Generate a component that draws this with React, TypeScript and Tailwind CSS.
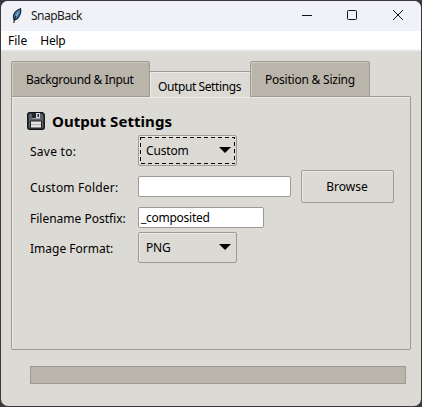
import type { ReactNode } from "react";

function Tab({ label, className }: { label: string; className: string }) {
  return <div className={`whitespace-nowrap border-[#9e9a91] ${className}`}>{label}</div>;
}

function Combo({ value, focused }: { value: string; focused?: boolean }) {
  return (
    <div className="flex h-[31px] w-[99px] rounded-[2px] border border-[#9e9a91] p-px shadow-[inset_1px_1px_0_#eeebe7]">
      <div className="relative flex flex-1 items-center justify-between pr-[4px] pl-[6px]">
        {focused && (
          <svg className="absolute inset-0" width="95" height="27" shapeRendering="crispEdges">
            <rect x="0.5" y="0.5" width="94" height="26" fill="none" stroke="#000" strokeDasharray="4 3" />
          </svg>
        )}
        <span className="mt-px tracking-[-0.15px]">{value}</span>
        <svg width="12" height="6" viewBox="0 0 12 6" className="mb-px">
          <path d="M0 0h12L6 6z" fill="#000" />
        </svg>
      </div>
    </div>
  );
}

function Field({ value, className }: { value?: string; className: string }) {
  return (
    <div className={`flex h-[21px] items-center rounded-[2px] border border-[#9e9a91] bg-white pl-[2px] tracking-[-0.27px] ${className}`}>
      {value}
    </div>
  );
}

function Row({ label, className, labelClass, children }: { label: string; className: string; labelClass: string; children: ReactNode }) {
  return (
    <div className={`flex items-center ${className}`}>
      <span className={`w-[108px] shrink-0 pt-[2px] whitespace-nowrap ${labelClass}`}>{label}</span>
      {children}
    </div>
  );
}

export default function App() {
  return (
    <div className="h-[407px] w-[422px] bg-[#3c393e] p-px font-['Noto_Sans','Open_Sans',sans-serif] text-[12px] leading-4 text-black">
      <div className="flex h-[405px] w-[420px] flex-col overflow-hidden rounded-[7px] bg-[#dcdad5]">
        <header className="flex h-[30px] shrink-0 items-center bg-[#f1f2f8]">
          <svg width="10" height="16" viewBox="0 0 10 16" className="ml-[11px]">
            <path d="M8.5.7C5 1.8 2 5 1.5 8.200L2 12l2.500-.8C7.500 9 9.400 4.500 8.500.7Z" fill="#4a87c7" stroke="#17222e" strokeWidth="1.200" />
            <path d="M7 3C4.500 6 3 9 1.800 15" fill="none" stroke="#111" strokeWidth="1" />
            <path d="M6.500 3.500 4 8" stroke="#a9d2f5" strokeWidth="1" />
          </svg>
          <span className="ml-[9px] tracking-[-0.5px] text-[#1b1b1b]">SnapBack</span>
          <svg width="104" height="12" viewBox="0 0 104 12" className="mr-[15px] mb-[2px] ml-auto" fill="none" stroke="#111">
            <path d="M0 6.500h10" />
            <rect x="45.500" y="1.500" width="9" height="9" rx="1" />
            <path d="m91 1 10 10M101 1 91 11" />
          </svg>
        </header>
        <nav className="flex h-[20px] shrink-0 items-center gap-[13px] border-b-2 border-[#f0f0f0] bg-white pt-[2px] pl-[7px]">
          <span>File</span>
          <span className="tracking-[-0.2px]">Help</span>
        </nav>
        <main className="flex flex-1 flex-col pt-[10px] pl-[10px]">
          <div className="relative z-10 flex h-[36px] items-end">
            <Tab label="Background & Input" className="h-[36px] w-[139px] rounded-t-[2px] border bg-[#bab5ab] pt-[10px] pl-[14px] tracking-[-0.35px] shadow-[inset_1px_1px_0_#cfcbc3]" />
            <Tab label="Output Settings" className="h-[26px] w-[100px] border-t bg-[#dcdad5] pt-[7px] pl-[8px] tracking-[-0.4px] shadow-[inset_1px_1px_0_#eeebe7]" />
            <Tab label="Position & Sizing" className="h-[36px] w-[120px] rounded-t-[2px] border bg-[#bab5ab] pt-[10px] pl-[14px] tracking-[-0.22px] shadow-[inset_1px_1px_0_#cfcbc3]" />
          </div>
          <section className="-mt-px h-[254px] w-[400px] rounded-b-[2px] border border-[#9e9a91] pt-[13px] pl-[18px] shadow-[inset_1px_1px_0_#eeebe7]">
            <h1 className="-ml-[3px] flex h-[22px] items-center text-[15px] font-bold tracking-[0.05px]">
              <svg width="18" height="18" viewBox="0 0 18 18" className="mr-[7px]">
                <path d="M3 .8h12.500L17.200 2.500V15.500a1.700 1.700 0 0 1-1.700 1.700H2.500A1.700 1.700 0 0 1 .8 15.500V2.500A1.700 1.700 0 0 1 2.500.8Z" fill="#59606a" stroke="#101114" strokeWidth="1.500" />
                <path d="M5 1h8v5.500H5z" fill="#d5d8dc" />
                <path d="M5 1h4v5H5zM10.500 2h1.500v3h-1.500z" fill="#22252a" />
                <path d="M3.500 9h11v7h-11z" fill="#e6e4e0" stroke="#22252a" />
                <path d="M4 12.500h10" stroke="#b1b1b1" />
              </svg>
              Output Settings
            </h1>
            <Row label="Save to:" labelClass="tracking-[0.25px]" className="mt-[3px] h-[31px]">
              <Combo value="Custom" focused />
            </Row>
            <Row label="Custom Folder:" labelClass="tracking-[0.2px]" className="mt-[4px] h-[33px]">
              <Field className="w-[153px]" />
              <button className="ml-[10px] h-[33px] w-[93px] rounded-[2px] border border-[#9e9a91] pt-px pr-px shadow-[inset_1px_1px_0_#eeebe7]">Browse</button>
            </Row>
            <Row label="Filename Postfix:" labelClass="" className="mt-[4px] h-[21px]">
              <Field className="w-[126px]" value="_composited" />
            </Row>
            <Row label="Image Format:" labelClass="" className="mt-[4px] h-[31px]">
              <Combo value="PNG" />
            </Row>
          </section>
          <div className="mt-[16px] ml-[19px] h-[18px] w-[376px] border border-[#9e9a91] bg-[#bab5ab]" />
        </main>
      </div>
    </div>
  );
}
